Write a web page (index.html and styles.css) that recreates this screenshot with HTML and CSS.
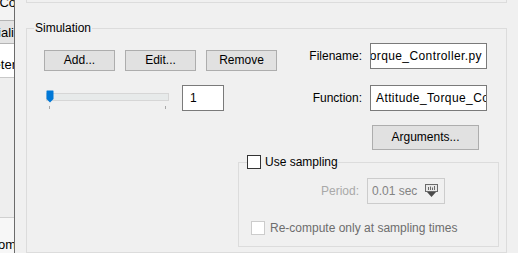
FILE: index.html
```html
<!DOCTYPE html>
<html lang="en">
<head>
    <meta charset="UTF-8" />
    <title>Simulation</title>
    <link rel="stylesheet" href="styles.css">
</head>
<body>
<div class="window">
    <div class="side-list">
        <div class="item item-top"><span>Co</span></div>
        <div class="item item-grey"><span>Initiali</span></div>
        <div class="item item-white"><span>Parameter</span></div>
        <div class="item-space"></div>
        <div class="item item-bottom"><span>Custom</span></div>
    </div>

    <div class="main">
        <div class="prev-group"></div>

        <div class="group sim">
            <span class="group-title">Simulation</span>

            <div class="sim-top">
                <div class="sim-left">
                    <div class="btn-row">
                        <button class="btn">Add...</button>
                        <button class="btn">Edit...</button>
                        <button class="btn">Remove</button>
                    </div>
                    <div class="slider-row">
                        <div class="slider">
                            <div class="track">
                                <svg class="thumb" width="8" height="13" viewBox="0 0 8 13">
                                    <path d="M1 0.5 H7 Q7.5 0.5 7.5 1 V9 L4 12.5 L0.5 9 V1 Q0.5 0.5 1 0.5 Z" fill="#0078d7"/>
                                </svg>
                            </div>
                            <div class="ticks"><span></span><span></span></div>
                        </div>
                        <div class="spin">1</div>
                    </div>
                </div>

                <div class="sim-right">
                    <label class="field-label">Filename:</label>
                    <div class="textbox textbox-end"><span>Attitude_Torque_Controller.py</span></div>
                    <label class="field-label">Function:</label>
                    <div class="textbox"><span>Attitude_Torque_Controller</span></div>
                    <button class="btn btn-args">Arguments...</button>
                </div>
            </div>

            <div class="group sampling">
                <span class="group-title check-title">
                    <span class="checkbox"></span>
                    Use sampling
                </span>
                <div class="period-row">
                    <span class="period-label">Period:</span>
                    <div class="combo">
                        <span>0.01 sec</span>
                        <svg width="15" height="14" viewBox="0 0 15 14">
                            <rect x="1.5" y="0.5" width="12" height="7" fill="#e8e8e8" stroke="#6a6a6a"/>
                            <path d="M4.5 3 V6 M6.5 2.5 V6 M8.5 3.5 V6 M10.5 2 V6" stroke="#6a6a6a"/>
                            <path d="M3 8 H12 L7.5 13 Z" fill="#4a4a4a"/>
                        </svg>
                    </div>
                </div>
                <div class="check-row">
                    <span class="checkbox checkbox-off"></span>
                    <span>Re-compute only at sampling times</span>
                </div>
            </div>
        </div>
    </div>
</div>
</body>
</html>
```

FILE: styles.css
```css
body {
    margin: 0;
    background-color: #f0f0f0;
    color: #000;
    font-family: "Liberation Sans", Arial, sans-serif;
    font-size: 12px;
    overflow: hidden;
}
.window {
    display: flex;
    width: 518px;
    height: 253px;
}

/* clipped list on the left */
.side-list {
    flex-shrink: 0;
    width: 14px;
    border-right: 1px solid #6b6b6b;
    display: flex;
    flex-direction: column;
    overflow: hidden;
}
.item {
    display: flex;
    justify-content: flex-end;
    align-items: center;
    overflow: hidden;
    white-space: nowrap;
    font-size: 13px;
}
.item span {
    margin-right: -2px;
}
.item-top {
    height: 20px;
    align-items: flex-end;
    background-color: #f3f3f3;
    border-bottom: 1px solid #b4b4b4;
}
.item-top span {
    margin-bottom: 10px;
}
.item-grey {
    height: 22px;
    background-color: #e4e4e4;
    border-bottom: 1px solid #b4b4b4;
}
.item-grey span {
    margin-right: 0;
}
.item-white {
    height: 34px;
    background-color: #fff;
    border-bottom: 1px solid #c8c8c8;
    padding-top: 8px;
    box-sizing: border-box;
}
.item-space {
    height: 139px;
    background-color: #eeeeee;
    border-bottom: 1px solid #d0d0d0;
}
.item-bottom {
    flex: 1;
    background-color: #f7f7f7;
    align-items: flex-end;
}
.item-bottom span {
    margin-bottom: 1px;
}

/* main area */
.main {
    flex-shrink: 0;
    padding-left: 11px;
    display: flex;
    flex-direction: column;
}
.prev-group {
    width: 479px;
    height: 2px;
    border: 1px solid #dcdcdc;
    border-top: none;
}
.group {
    position: relative;
    border: 1px solid #dcdcdc;
}
.group-title {
    position: absolute;
    top: -8px;
    left: 7px;
    padding: 0 1px;
    background-color: #f0f0f0;
    line-height: 14px;
}
.sim {
    margin-top: 25px;
    width: 481px;
    height: 260px;
    padding: 14px 19px 0 17px;
    box-sizing: border-box;
    display: flex;
    flex-direction: column;
}
.sim-top {
    display: flex;
    justify-content: space-between;
}

/* buttons */
.btn {
    height: 21px;
    width: 71px;
    margin: 0;
    padding: 0;
    background-color: #e1e1e1;
    border: 1px solid #adadad;
    font-family: inherit;
    font-size: 12px;
    color: #000;
}
.btn-row {
    display: flex;
    gap: 10px;
}
.sim-left {
    margin-top: 7px;
}

/* slider */
.slider-row {
    display: flex;
    margin-top: 14px;
}
.slider {
    width: 126px;
}
.track {
    position: relative;
    margin: 8px 0 0 2px;
    width: 121px;
    height: 6px;
    background-color: #e7eaea;
    border: 1px solid #d6d6d6;
}
.thumb {
    position: absolute;
    left: -1px;
    top: -4px;
}
.ticks {
    display: flex;
    justify-content: space-between;
    margin: 5px 0 0 5px;
    width: 117px;
}
.ticks span {
    width: 1px;
    height: 3px;
    background-color: #a8a8a8;
}
.spin {
    margin-left: 12px;
    width: 33px;
    height: 24px;
    background-color: #fff;
    border: 1px solid #7a7a7a;
    line-height: 24px;
    padding-left: 7px;
}

/* right fields */
.sim-right {
    display: grid;
    grid-template-columns: auto 117px;
    column-gap: 8px;
    row-gap: 16px;
    align-items: center;
}
.field-label {
    justify-self: end;
}
.textbox {
    height: 24px;
    background-color: #fff;
    border: 1px solid #7a7a7a;
    display: flex;
    align-items: center;
    overflow: hidden;
    white-space: nowrap;
    padding: 0 4px 0 5px;
    letter-spacing: 0.4px;
}
.textbox-end {
    justify-content: flex-end;
}
.btn-args {
    grid-column: 2;
    justify-self: start;
    margin: -2px 0 0 2px;
    width: 107px;
    height: 25px;
}

/* sampling group */
.sampling {
    align-self: flex-end;
    margin: 12px -12px 0 0;
    width: 261px;
    height: 85px;
    padding-top: 15px;
    box-sizing: border-box;
}
.check-title {
    display: flex;
    align-items: center;
    gap: 4px;
    left: 8px;
    padding: 0;
}
.checkbox {
    width: 12px;
    height: 12px;
    background-color: #fff;
    border: 1px solid #333;
}
.checkbox-off {
    border-color: #cccccc;
}
.period-row {
    display: flex;
    align-items: center;
    gap: 8px;
}
.period-label {
    width: 120px;
    text-align: right;
    color: #a9a9a9;
}
.combo {
    width: 67px;
    height: 24px;
    border: 1px solid #cccccc;
    display: flex;
    align-items: center;
    justify-content: space-between;
    padding: 0 5px 0 4px;
    color: #838383;
}
.check-row {
    display: flex;
    align-items: center;
    gap: 5px;
    margin: 17px 0 0 12px;
    color: #6d6d6d;
}
```
